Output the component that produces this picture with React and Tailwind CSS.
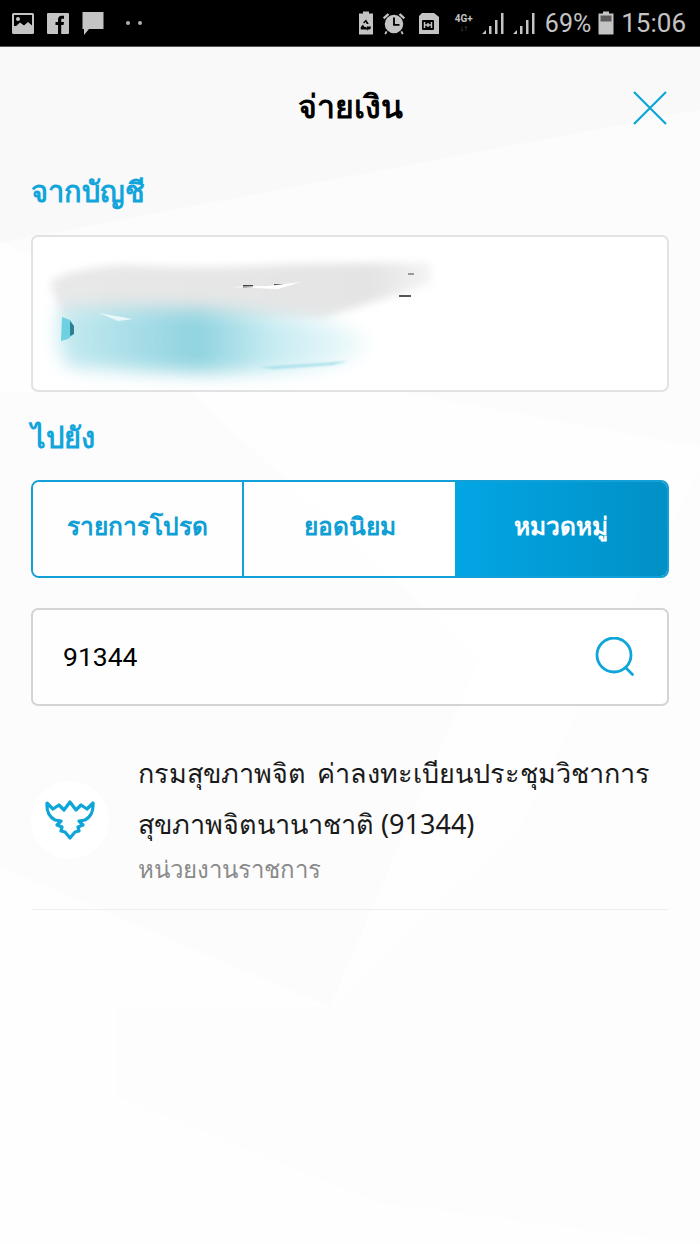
import React from 'react';

const BLUE = '#0ea5d8';

const PhotoIcon = () => (
    <svg width="24" height="23" viewBox="0 0 24 23">
        <rect x="1" y="1" width="22" height="21" rx="1.5" fill="#c4c4c4" />
        <rect x="3" y="3" width="18" height="11" fill="#000" />
        <circle cx="7" cy="7" r="2" fill="#c4c4c4" />
        <path d="M3 16 L9 10.5 L13 13.5 L17 10 L21 13.5 V20 H3 Z" fill="#c4c4c4" />
    </svg>
);

const FacebookIcon = () => (
    <svg width="24" height="23" viewBox="0 0 24 23">
        <rect x="1" y="1" width="22" height="21" rx="1" fill="#c4c4c4" />
        <path d="M12 22 V13 H9.5 V10 H12 V7.5 C12 5 13.5 3.8 15.5 3.8 H18 V6.8 H16.3 C15.4 6.8 15.2 7.2 15.2 8 V10 H18 L17.5 13 H15.2 V22 Z" fill="#000" />
    </svg>
);

const ChatIcon = () => (
    <svg width="24" height="25" viewBox="0 0 24 25">
        <path d="M1.5 1 H22.5 V18 H8 L3 24 V18 H1.5 Z" fill="#c4c4c4" />
    </svg>
);

const RecycleIcon = () => (
    <svg width="16" height="24" viewBox="0 0 16 24">
        <path d="M5 0.5 H11 V2.5 H15 V23.5 H1 V2.5 H5 Z" fill="#c4c4c4" />
        <path d="M8 8.5 L10.8 13 H8.8 L7.3 10.8 L6.2 12.5 L5 11.5 Z M3.5 15 L5 13.8 L6.5 16 H8 V18.5 H3 L2.5 17 Z M9.5 15.5 H13 L12.5 18 L11 18.5 H9.5 V20 L7.8 17.5 L9.5 15 Z" fill="#000" />
    </svg>
);

const AlarmIcon = () => (
    <svg width="24" height="25" viewBox="0 0 26 25">
        <path d="M1 6 L6 1.5 L8 3 L2.5 8 Z M25 6 L20 1.5 L18 3 L23.5 8 Z" fill="#c4c4c4" />
        <circle cx="13" cy="13" r="10" fill="#c4c4c4" />
        <path d="M12 6 H14 V13 H19 V15 H12 Z" fill="#000" />
        <path d="M5 21 L3.5 24 M21 21 L22.5 24" stroke="#c4c4c4" strokeWidth="2" />
    </svg>
);

const SimIcon = () => (
    <svg width="22" height="23" viewBox="0 0 22 23">
        <path d="M1 4 L4 1 H16 L21 5 V22 H1 Z" fill="#c4c4c4" />
        <rect x="4" y="8" width="12" height="10" rx="1" fill="#000" />
        <path d="M6.5 10 V16 M13.5 10 V16 M6.5 13 H13.5 M10 11 V15" stroke="#c4c4c4" strokeWidth="1.5" />
    </svg>
);

const SignalIcon = () => (
    <svg width="24" height="23" viewBox="0 0 24 23">
        <path d="M0 22 L4 18 V22 Z" fill="#c4c4c4" />
        <rect x="7" y="14" width="2.5" height="8" fill="#c4c4c4" />
        <rect x="13" y="8" width="2.5" height="14" fill="#c4c4c4" />
        <rect x="19" y="1" width="2.5" height="21" fill="#c4c4c4" />
    </svg>
);

const BatteryIcon = () => (
    <svg width="16" height="24" viewBox="0 0 16 24">
        <path d="M5 0.5 H11 V2.5 H15.5 V23.5 H0.5 V2.5 H5 Z" fill="#c4c4c4" />
        <rect x="2.5" y="4.5" width="11" height="6" fill="#5a5a5a" />
    </svg>
);

// the garuda crest, outline only
const CrestIcon = () => (
    <svg width="50" height="40" viewBox="0 0 50 40">
        <path
            d="M2 3 L8 9 L14 5 L19 10 L25 2 L31 10 L36 5 L42 9 L48 3 C48.5 11 46 17 40 20 L34 21 L38 25 L33 27 L34 31 L30 32 L25 38 L20 32 L16 31 L17 27 L12 25 L16 21 L10 20 C4 17 1.5 11 2 3 Z"
            fill="none"
            stroke={BLUE}
            strokeWidth="3.2"
            strokeLinejoin="round"
        />
    </svg>
);

const PageBackground = () => (
    <svg className="absolute left-0 top-0" width="700" height="1197" viewBox="0 0 700 1197">
        <path d="M0 0 H700 V63 L0 196 Z" fill="#f9f9f9" />
        <path d="M0 196 L700 63 V400 L400 345 Z" fill="#fcfcfc" />
        <path d="M0 345 L190 345 L480 610 L330 960 L0 820 Z" fill="#fcfcfc" />
        <path d="M117 1050 L380 1156 L700 1197 V420 L520 780 L330 960 L117 960 Z" fill="#fdfdfd" />
    </svg>
);

// blurred-out account details
const AccountSmudge = () => (
    <svg className="absolute left-0 top-0" width="635" height="154" viewBox="0 0 635 154">
        <defs>
            <filter id="soft" x="-20%" y="-50%" width="140%" height="200%">
                <feGaussianBlur stdDeviation="4" />
            </filter>
            <filter id="softer" x="-20%" y="-50%" width="140%" height="200%">
                <feGaussianBlur stdDeviation="9" />
            </filter>
            <filter id="tiny" x="-20%" y="-100%" width="140%" height="300%">
                <feGaussianBlur stdDeviation="1" />
            </filter>
            <linearGradient id="grey" x1="0" x2="1" y1="0" y2="0">
                <stop offset="0" stopColor="#e8e8e8" />
                <stop offset="0.85" stopColor="#e4e4e4" />
                <stop offset="1" stopColor="#f4f4f4" />
            </linearGradient>
            <linearGradient id="teal" x1="0" x2="1" y1="0" y2="0">
                <stop offset="0" stopColor="#c6eaf0" />
                <stop offset="0.45" stopColor="#8fd3df" />
                <stop offset="0.7" stopColor="#c8ecf2" />
                <stop offset="1" stopColor="#f2fbfc" />
            </linearGradient>
        </defs>
        <path d="M17 46 C25 36 60 30 90 28 C140 30 180 32 240 28 C300 26 370 26 398 26 V46 C370 56 320 70 290 82 C200 84 90 84 30 80 Z" fill="url(#grey)" filter="url(#soft)" />
        <path d="M26 72 C90 68 200 72 260 80 C295 84 330 90 334 104 C332 124 300 132 240 134 C180 138 110 134 36 130 C26 120 24 100 26 72 Z" fill="url(#teal)" filter="url(#softer)" />
        <path d="M29 80 L37 83 L41 89 V97 L35 102 L28 104 Z" fill="#6fd0e2" />
        <path d="M37 84 L41 89 V97 L37 99 Z" fill="#2e7f8f" />
        <rect x="210" y="48" width="10" height="3" fill="#444" />
        <rect x="241" y="47" width="9" height="3" fill="#555" />
        <rect x="366" y="58" width="12" height="2" fill="#555" />
        <rect x="375" y="36" width="6" height="2" fill="#999" />
        <path d="M196 50 L235 49 L268 45 L245 52 Z" fill="#ffffff" />
        <path d="M66 76 L100 82 L85 84 Z" fill="#e8f8fa" />
        <path d="M225 130 L290 126 L316 124 L300 128 L240 132 Z" fill="#a8e0ea" filter="url(#tiny)" />
    </svg>
);

const App = () => {
    return (
        <div
            className="w-[700px] h-[1244px] flex flex-col bg-[#fefefe] overflow-hidden"
            style={{ fontFamily: '"Noto Sans", "DejaVu Sans", "Liberation Sans", sans-serif' }}
        >
            <div className="h-[47px] shrink-0 bg-black border-b border-[#555] flex items-center justify-between pl-[11px] pr-[14px] text-[#c4c4c4]">
                <div className="flex items-center gap-[11px]">
                    <PhotoIcon />
                    <FacebookIcon />
                    <ChatIcon />
                    <div className="flex gap-[8px] ml-[10px]">
                        <span className="w-[4px] h-[4px] rounded-full bg-[#b0b0b0]" />
                        <span className="w-[4px] h-[4px] rounded-full bg-[#b0b0b0]" />
                    </div>
                </div>
                <div className="flex items-center font-['Roboto']">
                    <RecycleIcon />
                    <span className="ml-[8px]"><AlarmIcon /></span>
                    <span className="ml-[12px]"><SimIcon /></span>
                    <div className="ml-[11px] flex flex-col items-center leading-none w-[26px]">
                        <span className="text-[10px] font-bold leading-[11px]">4G+</span>
                        <span className="text-[8px] leading-[10px] text-[#666]">↓↑</span>
                    </div>
                    <span className="ml-[5px]"><SignalIcon /></span>
                    <span className="ml-[7px]"><SignalIcon /></span>
                    <span className="ml-[8px] text-[25px] leading-none">69%</span>
                    <span className="ml-[7px]"><BatteryIcon /></span>
                    <span className="ml-[7px] text-[26px] leading-none">15:06</span>
                </div>
            </div>

            <div className="relative flex-1 px-[31px]">
                <PageBackground />
                <div className="relative">
                    <div className="h-[122px] pb-[4px] flex items-center justify-center relative">
                        <h1 className="text-[32px] font-bold text-black leading-none">จ่ายเงิน</h1>
                        <svg className="absolute right-[1px] top-[43px]" width="36" height="36" viewBox="0 0 36 36">
                            <path d="M2 2 L34 34 M34 2 L2 34" stroke={BLUE} strokeWidth="2.2" fill="none" />
                        </svg>
                    </div>

                    <div className="mt-[1px] h-[44px] text-[29px] font-bold leading-[42px] text-[#12a5dc]">จากบัญชี</div>

                    <div className="relative mt-[21px] h-[157px] rounded-[7px] border-2 border-[#e2e2e2] bg-white">
                        <AccountSmudge />
                    </div>

                    <div className="mt-[23px] h-[44px] text-[29px] font-bold leading-[44px] text-[#12a5dc]">ไปยัง</div>

                    <div className="mt-[21px] h-[98px] flex rounded-[8px] border-2 border-[#12a0d6] overflow-hidden text-[24.5px] font-bold">
                        <div className="w-[211px] pb-[5px] flex items-center justify-center border-r-2 border-[#12a0d6] bg-white/80 text-[#0e9fd4]">รายการโปรด</div>
                        <div className="w-[211px] pb-[5px] flex items-center justify-center bg-white/80 text-[#0e9fd4]">ยอดนิยม</div>
                        <div className="flex-1 pb-[5px] flex items-center justify-center bg-gradient-to-r from-[#02a6e4] to-[#0290c6] text-white">หมวดหมู่</div>
                    </div>

                    <div className="mt-[30px] h-[98px] flex items-center justify-between rounded-[7px] border-2 border-[#d4d4d4] bg-white/70 pl-[30px] pr-[32px]">
                        <span className="font-['Roboto'] text-[26.5px] text-black leading-none">91344</span>
                        <svg width="40" height="40" viewBox="0 0 40 40">
                            <circle cx="19" cy="18" r="17" stroke={BLUE} strokeWidth="2.8" fill="none" />
                            <path d="M31 31 L37.5 37.5" stroke={BLUE} strokeWidth="2.8" strokeLinecap="round" />
                        </svg>
                    </div>

                    <div className="mt-[44px] h-[160px] flex items-center border-b border-[#efefef]">
                        <div className="w-[78px] h-[78px] -mt-[20px] rounded-full bg-white flex items-center justify-center shrink-0">
                            <CrestIcon />
                        </div>
                        <div className="ml-[29px] -mt-[20px]">
                            <div className="text-[27px] leading-[49px] -translate-y-[2px] [word-spacing:4px] text-[#1a1a1a] whitespace-nowrap">กรมสุขภาพจิต ค่าลงทะเบียนประชุมวิชาการ</div>
                            <div className="text-[27px] leading-[49px] text-[#1a1a1a] whitespace-nowrap">สุขภาพจิตนานาชาติ (91344)</div>
                            <div className="text-[24px] leading-[42px] text-[#8a8a8a] whitespace-nowrap">หน่วยงานราชการ</div>
                        </div>
                    </div>
                </div>
            </div>
        </div>
    );
};

export default App;
